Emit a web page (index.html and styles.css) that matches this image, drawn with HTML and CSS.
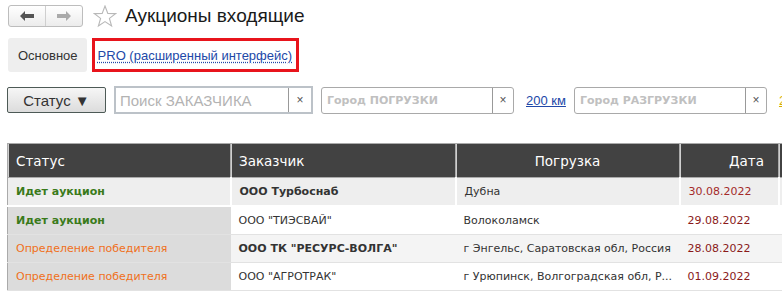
FILE: index.html
```html
<!DOCTYPE html>
<html lang="ru">
<head>
    <meta charset="UTF-8">
    <title>Аукционы входящие</title>
    <link rel="stylesheet" href="styles.css">
</head>
<body>
    <div class="toolbar">
        <div class="nav">
            <span class="nav-btn back">
                <svg width="14" height="10" viewBox="0 0 14 10"><path d="M0 5 L5 0 L5 3 L14 3 L14 7 L5 7 L5 10 Z" fill="#555"/></svg>
            </span>
            <span class="nav-btn fwd">
                <svg width="14" height="10" viewBox="0 0 14 10"><path d="M14 5 L9 0 L9 3 L0 3 L0 7 L9 7 L9 10 Z" fill="#aaa"/></svg>
            </span>
        </div>
        <svg class="star" width="24" height="23" viewBox="0 0 24 23"><path d="M12 1 L14.8 8.4 L22.6 8.6 L16.4 13.4 L18.6 21 L12 16.6 L5.4 21 L7.6 13.4 L1.4 8.6 L9.2 8.4 Z" fill="none" stroke="#b8b8b8" stroke-width="1.1"/></svg>
        <h1>Аукционы входящие</h1>
    </div>

    <div class="tabs">
        <span class="tab">Основное</span>
        <span class="tab-pro"><a href="#">PRO (расширенный интерфейс)</a></span>
    </div>

    <div class="filters">
        <button type="button" class="status-btn">Статус ▼</button>
        <div class="field field-main">
            <span class="placeholder">Поиск ЗАКАЗЧИКА</span>
            <span class="clear">×</span>
        </div>
        <div class="field field-city">
            <span class="placeholder">Город ПОГРУЗКИ</span>
            <span class="clear">×</span>
        </div>
        <a href="#" class="km">200 км</a>
        <div class="field field-city">
            <span class="placeholder">Город РАЗГРУЗКИ</span>
            <span class="clear">×</span>
        </div>
        <a href="#" class="km km-more">200 км</a>
    </div>

    <table class="grid">
        <colgroup>
            <col class="c-status">
            <col class="c-client">
            <col class="c-from">
            <col class="c-date">
            <col class="c-rest">
        </colgroup>
        <thead>
            <tr>
                <th>Статус</th>
                <th>Заказчик</th>
                <th class="center">Погрузка</th>
                <th class="right">Дата</th>
                <th></th>
            </tr>
        </thead>
        <tbody>
            <tr class="current">
                <td class="st-active">Идет аукцион</td>
                <td class="bold">ООО Турбоснаб</td>
                <td>Дубна</td>
                <td class="date first">30.08.2022</td>
                <td></td>
            </tr>
            <tr>
                <td class="st-active">Идет аукцион</td>
                <td>ООО "ТИЭСВАЙ"</td>
                <td>Волоколамск</td>
                <td class="date">29.08.2022</td>
                <td></td>
            </tr>
            <tr class="alt">
                <td class="st-winner">Определение победителя</td>
                <td class="bold">ООО ТК "РЕСУРС-ВОЛГА"</td>
                <td>г Энгельс, Саратовская обл, Россия</td>
                <td class="date">28.08.2022</td>
                <td></td>
            </tr>
            <tr>
                <td class="st-winner">Определение победителя</td>
                <td>ООО "АГРОТРАК"</td>
                <td>г Урюпинск, Волгоградская обл, Р...</td>
                <td class="date">01.09.2022</td>
                <td></td>
            </tr>
        </tbody>
    </table>
</body>
</html>
```

FILE: styles.css
```css
body {
    margin: 0;
    width: 900px;
    font-family: "Liberation Sans", Arial, sans-serif;
    color: #333;
    background: #fff;
}

html {
    overflow: hidden;
}

.toolbar {
    display: flex;
    align-items: center;
    height: 32px;
    padding: 0 0 0 8px;
}

.nav {
    display: flex;
    height: 20px;
    border: 1px solid #bdbdbd;
    border-radius: 3px;
    background: linear-gradient(#ffffff, #ececec);
}

.nav-btn {
    display: flex;
    align-items: center;
    justify-content: center;
    width: 36px;
}

.nav-btn.back {
    border-right: 1px solid #cfcfcf;
}

.star {
    margin-left: 10px;
}

h1 {
    margin: 0 0 0 8px;
    font-size: 19px;
    font-weight: normal;
    color: #1a1a1a;
}

.tabs {
    display: flex;
    align-items: stretch;
    height: 34px;
    margin: 6px 0 0 8px;
    font-size: 13px;
}

.tab {
    display: flex;
    align-items: center;
    padding: 0 9px 0 10px;
    background: #eeeeee;
    border-radius: 3px;
}

.tab-pro {
    display: flex;
    align-items: center;
    margin-left: 5px;
    padding: 0 4px 0 3px;
    border: 3px solid #e8141c;
}

.tab-pro a {
    color: #2148a8;
    text-decoration: underline dotted #2148a8;
    text-underline-offset: 2px;
}

.filters {
    display: flex;
    align-items: center;
    margin: 14px 0 0 7px;
    height: 28px;
}

.status-btn {
    width: 99px;
    height: 26px;
    padding: 0;
    border: 1px solid #4d5a56;
    border-radius: 2px;
    background: linear-gradient(#f6f6f6, #dcdcdc);
    font-family: "Liberation Sans", Arial, sans-serif;
    font-size: 15px;
    color: #333;
}

.field {
    display: flex;
    align-items: stretch;
    box-sizing: border-box;
    background: #fff;
}

.field-main {
    width: 199px;
    height: 28px;
    margin-left: 8px;
    border: 2px solid #bcc2c8;
}

.field-city {
    width: 193px;
    height: 27px;
    margin-left: 8px;
    border: 1px solid #a9a9a9;
    border-radius: 3px;
}

.placeholder {
    flex: 1;
    display: flex;
    align-items: center;
    padding-left: 4px;
    color: #b3b3b3;
    white-space: nowrap;
    overflow: hidden;
}

.field-main .placeholder {
    font-size: 15px;
}

.field-city .placeholder {
    padding-left: 5px;
    font-family: "DejaVu Sans", Verdana, sans-serif;
    font-size: 11px;
    font-weight: bold;
    color: #c0c0c0;
}

.clear {
    display: flex;
    align-items: center;
    justify-content: center;
    width: 20px;
    border-left: 1px solid #999;
    font-size: 12px;
    color: #555;
}

.field-main .clear {
    width: 22px;
}

.km {
    margin-left: 12px;
    font-size: 13px;
    color: #2148a8;
}

.km-more {
    color: #d8b000;
}

.grid {
    margin: 29px 0 0 7px;
    border-collapse: collapse;
    table-layout: fixed;
    width: 875px;
    font-family: "DejaVu Sans", Verdana, sans-serif;
    font-size: 11px;
    color: #333;
}

.c-status { width: 223px; }
.c-client { width: 225px; }
.c-from { width: 224px; }
.c-date { width: 99px; }

th {
    height: 33px;
    padding: 0 8px;
    background: #424242;
    color: #fff;
    font-size: 13.5px;
    font-weight: normal;
    text-align: left;
    border: 1px solid #aaa;
    box-shadow: inset 1px 0 0 #cfcfcf;
}

th.center { text-align: center; }
th.right { text-align: right; padding-right: 14px; }

td {
    height: 27px;
    padding: 0 2px 0 8px;
    white-space: nowrap;
    overflow: hidden;
    background: #fff;
    border-bottom: 1px solid #e2e2e2;
}

td:first-child {
    background: #dcdcdc;
    border-left: 1px solid #aaa;
}

tr.current td {
    height: 27px;
    background: #eeeeee;
    border-right: 2px solid #fff;
    border-bottom: 2px solid #fff;
}

tr.alt td:not(:first-child) {
    background: #f4f4f4;
}

.bold { font-weight: bold; }

.st-active {
    color: #3a7a1a;
    font-weight: bold;
}

.st-winner {
    color: #f07020;
}

.date {
    color: #8a1a1a;
}

.date.first {
    color: #a42a2a;
}
```
